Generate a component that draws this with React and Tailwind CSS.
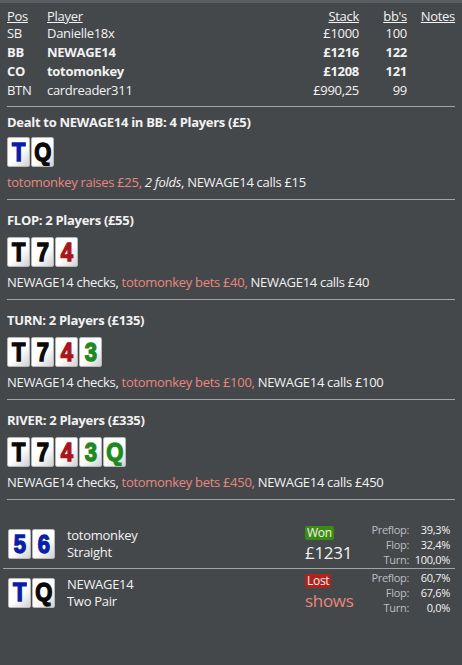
const players = [
  { pos: "SB", name: "Danielle18x", stack: "£1000", bbs: "100" },
  { pos: "BB", name: "NEWAGE14", stack: "£1216", bbs: "122", bold: true },
  { pos: "CO", name: "totomonkey", stack: "£1208", bbs: "121", bold: true },
  { pos: "BTN", name: "cardreader311", stack: "£990,25", bbs: "99" },
];

const suitColor = {
  b: "text-[#0a1fa8]",
  k: "text-[#0a0a0a]",
  r: "text-[#a8141b]",
  g: "text-[#1f8a1f]",
};

function Card({ rank, suit }) {
  return (
    <div className="w-[23px] h-[30px] rounded-[2px] border border-[#b8b8b8] bg-[linear-gradient(135deg,#ffffff_55%,#d0d0d0)] flex items-center justify-center overflow-hidden">
      <span
        className={`font-['Liberation_Sans',sans-serif] font-black text-[25px] leading-none scale-x-[0.88] ${suitColor[suit]}`}
        style={{ WebkitTextStroke: "1.4px currentColor" }}
      >
        {rank}
      </span>
    </div>
  );
}

function Cards({ list }) {
  return (
    <div className="flex gap-[1px]">
      {list.map((c, i) => (
        <Card key={i} rank={c[0]} suit={c[1]} />
      ))}
    </div>
  );
}

const Red = ({ children }) => <span className="text-[#e8877d]">{children}</span>;

function Street({ title, cards, children, first }) {
  return (
    <div className={`border-t border-[#a2a4a6] ${first ? "pt-[6px]" : "pt-[11px]"} pb-[8px]`}>
      <div className="font-bold leading-[18px]">{title}</div>
      <div className={first ? "mt-[6px]" : "mt-[8px]"}>
        <Cards list={cards} />
      </div>
      <div className="mt-[6px] leading-[18px]">{children}</div>
    </div>
  );
}

function Showdown({ cards, name, hand, badge, badgeColor, amount, amountColor, stats, border }) {
  return (
    <div className={`flex items-center h-[48px] pl-[5px] ${border ? "border-t border-[#a2a4a6]" : ""}`}>
      <Cards list={cards} />
      <div className="ml-[12px] w-[238px] leading-[17px]">
        <div>{name}</div>
        <div>{hand}</div>
      </div>
      <div className="w-[60px] flex flex-col items-start">
        <span className={`text-[12px] leading-[14px] px-[2px] rounded-[2px] ${badgeColor}`}>{badge}</span>
        <span className={`mt-[3px] text-[17px] leading-[20px] ${amountColor}`}>{amount}</span>
      </div>
      <div className="grid grid-cols-[44px_40px] text-[11px] leading-[15px] gap-x-[1px] text-right">
        {stats.map(([l, v]) => (
          <>
            <span key={l} className="text-[#bdbfc1]">{l}</span>
            <span key={l + "v"}>{v}</span>
          </>
        ))}
      </div>
    </div>
  );
}

export default function App() {
  return (
    <div className="w-[462px] h-[665px] bg-[#45484b] text-[#f2f2f2] text-[13px] font-['Open_Sans',sans-serif] tracking-[-0.3px] border-t-[3px] border-[#5c5f62]">
      <div className="px-[7px] pt-[5px]">
        <table className="w-full border-collapse">
          <thead>
            <tr className="leading-[16px]">
              <th className="text-left font-normal underline w-[40px]">Pos</th>
              <th className="text-left font-normal underline">Player</th>
              <th className="text-right font-normal underline">Stack</th>
              <th className="text-right font-normal underline w-[48px]">bb's</th>
              <th className="text-right font-normal underline w-[48px]">Notes</th>
            </tr>
          </thead>
          <tbody>
            {players.map((p) => (
              <tr key={p.pos} className={`leading-[19px] ${p.bold ? "font-bold" : ""}`}>
                <td>{p.pos}</td>
                <td>{p.name}</td>
                <td className="text-right">{p.stack}</td>
                <td className="text-right">{p.bbs}</td>
                <td></td>
              </tr>
            ))}
          </tbody>
        </table>
        <div className="mt-[6px]">
          <Street first title="Dealt to NEWAGE14 in BB: 4 Players (£5)" cards={["Tb", "Qk"]}>
            <Red>totomonkey raises £25, </Red>
            <i>2 folds</i>, NEWAGE14 calls £15
          </Street>
          <Street title="FLOP: 2 Players (£55)" cards={["Tk", "7k", "4r"]}>
            NEWAGE14 checks, <Red>totomonkey bets £40,</Red> NEWAGE14 calls £40
          </Street>
          <Street title="TURN: 2 Players (£135)" cards={["Tk", "7k", "4r", "3g"]}>
            NEWAGE14 checks, <Red>totomonkey bets £100,</Red> NEWAGE14 calls £100
          </Street>
          <Street title="RIVER: 2 Players (£335)" cards={["Tk", "7k", "4r", "3g", "Qg"]}>
            NEWAGE14 checks, <Red>totomonkey bets £450,</Red> NEWAGE14 calls £450
          </Street>
          <div className="border-t border-[#a2a4a6] h-[21px]"></div>
        </div>
      </div>
      <div className="pl-[3px] pr-[7px]">
        <Showdown
          cards={["5b", "6b"]}
          name="totomonkey"
          hand="Straight"
          badge="Won"
          badgeColor="bg-[#3c8c14]"
          amount="£1231"
          amountColor="text-[#f2f2f2]"
          stats={[["Preflop:", "39,3%"], ["Flop:", "32,4%"], ["Turn:", "100,0%"]]}
        />
        <Showdown
          border
          cards={["Tb", "Qk"]}
          name="NEWAGE14"
          hand="Two Pair"
          badge="Lost"
          badgeColor="bg-[#b0231c]"
          amount="shows"
          amountColor="text-[#e8877d]"
          stats={[["Preflop:", "60,7%"], ["Flop:", "67,6%"], ["Turn:", "0,0%"]]}
        />
      </div>
    </div>
  );
}
